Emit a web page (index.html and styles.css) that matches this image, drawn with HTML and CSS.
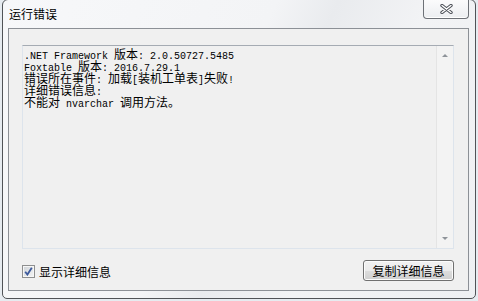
FILE: index.html
```html
<!DOCTYPE html>
<html lang="zh-CN">
<head>
  <meta charset="UTF-8">
  <title>运行错误</title>
  <link rel="stylesheet" href="styles.css">
</head>
<body>
  <div class="window">
    <header class="title-bar">
      <span class="title">运行错误</span>
      <button class="close-btn" aria-label="关闭">
        <svg width="13" height="10" viewBox="0 0 13 10">
          <path d="M2 1.5 L11 8.5 M11 1.5 L2 8.5" stroke="#4b4f57" stroke-width="3.4" stroke-linecap="round" fill="none"/>
          <path d="M2 1.5 L11 8.5 M11 1.5 L2 8.5" stroke="#ffffff" stroke-width="1.4" stroke-linecap="round" fill="none"/>
        </svg>
      </button>
    </header>

    <main class="client">
      <div class="textbox">
        <div class="log">
          <div class="line"><span class="en">.NET Framework </span>版本<span class="en">: 2.0.50727.5485</span></div>
          <div class="line"><span class="en">Foxtable </span>版本<span class="en">: 2016.7.29.1</span></div>
          <div class="line">错误所在事件<span class="en">: </span>加载<span class="en">[</span>装机工单表<span class="en">]</span>失败<span class="en">!</span></div>
          <div class="line">详细错误信息<span class="en">:</span></div>
          <div class="line">不能对<span class="en"> nvarchar </span>调用方法。</div>
        </div>
        <div class="scrollbar">
          <span class="arrow arrow-up"></span>
          <span class="arrow arrow-down"></span>
        </div>
      </div>

      <div class="footer">
        <label class="check">
          <span class="check-box">
            <svg width="9" height="9" viewBox="0 0 9 9">
              <path d="M1.2 4.8 L3.4 7.6 L7.8 0.8" stroke="#3d5a9c" stroke-width="1.8" fill="none"/>
            </svg>
          </span>
          显示详细信息
        </label>
        <button class="win-btn">复制详细信息</button>
      </div>
    </main>
  </div>
</body>
</html>
```

FILE: styles.css
```css
* {
  box-sizing: border-box;
  margin: 0;
  padding: 0;
}

html, body {
  width: 478px;
  height: 301px;
  overflow: hidden;
}

body {
  background: #e6ebf0;
  font-family: "Noto Sans CJK SC", "Liberation Sans", sans-serif;
  font-size: 12px;
  color: #000;
}

.window {
  width: 474px;
  height: 300px;
  margin: -1px 0 0 2px;
  border: 1px solid #505357;
  border-radius: 6px 6px 5px 5px;
  background: linear-gradient(115deg, #f7f8fa 0%, #f3f4f6 45%, #e9ebee 55%, #f2f3f5 70%, #eef0f3 100%);
  display: flex;
  flex-direction: column;
  overflow: hidden;
}

/* title bar */
.title-bar {
  height: 28px;
  display: flex;
  justify-content: space-between;
  align-items: flex-start;
  padding: 0 6px 0 6px;
}

.title {
  margin-top: 6px;
  line-height: 16px;
  font-size: 12px;
  color: #000;
}

.close-btn {
  width: 46px;
  height: 19px;
  border: 1px solid #6d7177;
  border-top: none;
  border-radius: 0 0 4px 4px;
  background: linear-gradient(#fbfbfc, #eceef1);
  display: flex;
  align-items: center;
  justify-content: center;
  box-shadow: inset 0 -1px 0 #ffffff;
}

/* client area */
.client {
  flex: 1;
  margin: 0 6px 7px 5px;
  border: 1px solid #8c9096;
  background: #f0f0f0;
  padding: 16px 14px 9px 13px;
  display: flex;
  flex-direction: column;
}

.textbox {
  width: 432px;
  height: 204px;
  border: 1px solid #dde4ec;
  border-top-color: #a5abb3;
  background: #f0f0f0;
  display: flex;
}

.log {
  flex: 1;
  padding: 2px 0 0 1px;
  font-family: "Noto Sans CJK SC", sans-serif;
  font-size: 12px;
}

.line {
  height: 12px;
  line-height: 12px;
  white-space: pre;
}

.en {
  font-family: "Liberation Mono", monospace;
  font-size: 10px;
}

.scrollbar {
  width: 17px;
  background: #f3f3f3;
  border-left: 1px solid #e4e4e4;
  display: flex;
  flex-direction: column;
  justify-content: space-between;
  align-items: center;
  padding: 8px 0 8px;
}

.arrow {
  width: 0;
  height: 0;
  border-left: 3px solid transparent;
  border-right: 3px solid transparent;
}

.arrow-up {
  border-bottom: 3px solid #8e9399;
}

.arrow-down {
  border-top: 3px solid #8e9399;
}

/* footer */
.footer {
  margin-top: auto;
  display: flex;
  justify-content: space-between;
  align-items: center;
}

.check {
  display: flex;
  align-items: center;
  gap: 4px;
  line-height: 14px;
  margin-top: 2px;
}

.check-box {
  width: 13px;
  height: 13px;
  border: 1px solid #8e8f8f;
  background: linear-gradient(135deg, #cfd3d8, #f4f4f4);
  box-shadow: inset 0 0 0 1px #f6f6f6;
  display: flex;
  align-items: center;
  justify-content: center;
}

.win-btn {
  width: 91px;
  height: 21px;
  border: 1px solid #707070;
  border-radius: 3px;
  background: linear-gradient(#f2f2f2 0%, #ebebeb 50%, #dddddd 51%, #cfcfcf 100%);
  box-shadow: inset 0 0 0 1px #fcfcfc;
  font-family: "Noto Sans CJK SC", sans-serif;
  font-size: 12px;
  color: #000;
  line-height: 18px;
}
```
